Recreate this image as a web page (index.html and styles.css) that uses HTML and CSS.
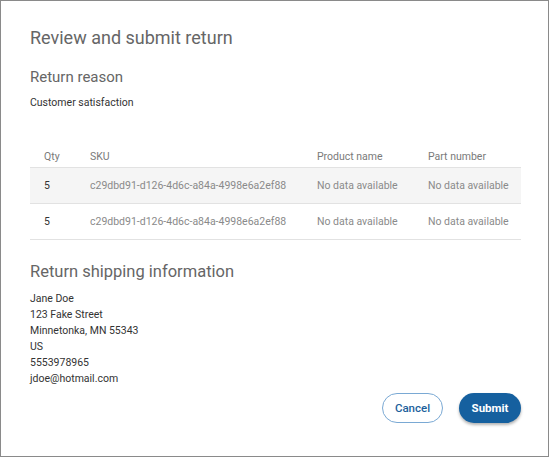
FILE: index.html
```html
<!DOCTYPE html>
<html>
<head>
<meta charset="utf-8">
<link rel="stylesheet" href="styles.css">
</head>
<body>
<div class="dialog">
  <h1 class="title">Review and submit return</h1>
  <h2 class="section-title">Return reason</h2>
  <p class="reason">Customer satisfaction</p>
  <table class="items">
    <thead>
      <tr><th class="c-qty">Qty</th><th class="c-sku">SKU</th><th class="c-name">Product name</th><th class="c-part">Part number</th></tr>
    </thead>
    <tbody>
      <tr class="shaded"><td class="qty">5</td><td>c29dbd91-d126-4d6c-a84a-4998e6a2ef88</td><td>No data available</td><td>No data available</td></tr>
      <tr><td class="qty">5</td><td>c29dbd91-d126-4d6c-a84a-4998e6a2ef88</td><td>No data available</td><td>No data available</td></tr>
    </tbody>
  </table>
  <h2 class="section-title ship">Return shipping information</h2>
  <div class="address">
    <div>Jane Doe</div>
    <div>123 Fake Street</div>
    <div>Minnetonka, MN 55343</div>
    <div>US</div>
    <div>5553978965</div>
    <div>jdoe@hotmail.com</div>
  </div>
  <div class="actions">
    <button class="btn btn-outline">Cancel</button>
    <button class="btn btn-primary">Submit</button>
  </div>
</div>
</body>
</html>
```
FILE: styles.css
```css
html, body { margin: 0; padding: 0; background: #fff; }
body { font-family: Roboto, "Liberation Sans", sans-serif; }
.dialog {
  border: 1px solid #8a8a8a;
  padding: 0 27px 0 29px;
  box-sizing: border-box;
  width: 549px;
  height: 457px;
}
.title {
  margin: 0;
  padding-top: 25px;
  font-size: 18px;
  line-height: 24px;
  font-weight: 400;
  color: #666;
}
.section-title {
  margin: 17px 0 0;
  font-size: 15px;
  line-height: 20px;
  font-weight: 400;
  color: #666;
}
.reason {
  margin: 8px 0 0;
  font-size: 10.5px;
  line-height: 16px;
  color: #333;
}
.items {
  margin-top: 39px;
  width: 491px;
  border-collapse: collapse;
  font-size: 10.5px;
}
.items th {
  text-align: left;
  font-weight: 400;
  color: #7a7a7a;
  height: 17px;
  padding: 0;
  vertical-align: top;
  line-height: 13px;
  border-bottom: 1px solid #e2e2e2;
}
.items td {
  height: 35px;
  padding: 0;
  color: #8a8a8a;
  border-bottom: 1px solid #e2e2e2;
}
.items .c-qty { width: 60px; padding-left: 14px; box-sizing: border-box; }
.items td.qty { padding-left: 14px; color: #333; }
.items .c-sku { width: 227px; }
.items .c-name { width: 111px; }
.shaded { background: #f5f5f5; }
.ship { margin-top: 22px; font-size: 16.5px; }
.address {
  margin-top: 9px;
  font-size: 10.5px;
  line-height: 16px;
  color: #333;
}
.actions {
  display: flex;
  justify-content: flex-end;
  gap: 16px;
  margin-top: 6px;
}
.btn {
  height: 30px;
  border-radius: 15px;
  font-family: Roboto, "Liberation Sans", sans-serif;
  font-size: 11.5px;
  padding: 0;
  cursor: pointer;
}
.btn-outline {
  background: #fff;
  border: 1px solid #7aa9d4;
  color: #1c5f9c;
  width: 61px;
  font-weight: 500;
}
.btn-primary {
  background: #15609f;
  border: none;
  color: #fff;
  font-weight: 700;
  width: 62px;
  box-shadow: 0 2px 3px rgba(0,0,0,0.3);
}
```
